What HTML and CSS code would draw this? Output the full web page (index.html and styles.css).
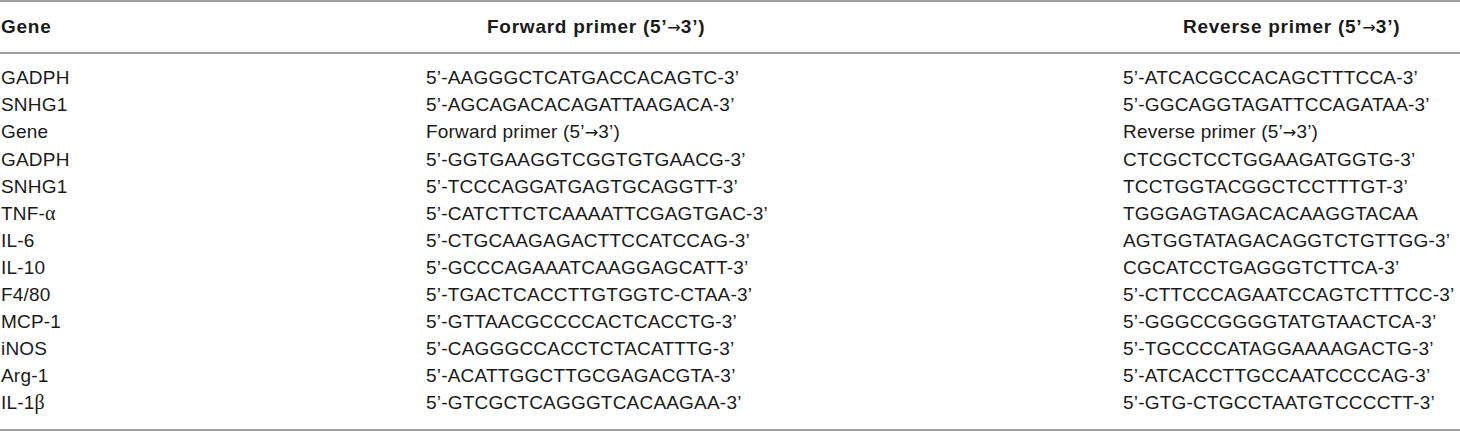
FILE: index.html
```html
<!DOCTYPE html>
<html>
<head>
<meta charset="utf-8">
<link rel="stylesheet" href="styles.css">
</head>
<body>
<table class="primers">
  <thead>
    <tr>
      <th class="c1">Gene</th>
      <th class="c2"><span class="hd2">Forward primer (5’<span class="arr">→</span>3’)</span></th>
      <th class="c3"><span class="hd3">Reverse primer (5’<span class="arr">→</span>3’)</span></th>
    </tr>
  </thead>
  <tbody>
    <tr class="first"><td>GADPH</td><td>5’-AAGGGCTCATGACCACAGTC-3’</td><td>5’-ATCACGCCACAGCTTTCCA-3’</td></tr>
    <tr><td>SNHG1</td><td>5’-AGCAGACACAGATTAAGACA-3’</td><td>5’-GGCAGGTAGATTCCAGATAA-3’</td></tr>
    <tr><td>Gene</td><td>Forward primer (5’<span class="arr">→</span>3’)</td><td>Reverse primer (5’<span class="arr">→</span>3’)</td></tr>
    <tr><td>GADPH</td><td>5’-GGTGAAGGTCGGTGTGAACG-3’</td><td>CTCGCTCCTGGAAGATGGTG-3’</td></tr>
    <tr><td>SNHG1</td><td>5’-TCCCAGGATGAGTGCAGGTT-3’</td><td>TCCTGGTACGGCTCCTTTGT-3’</td></tr>
    <tr><td>TNF-<span class="greek">α</span></td><td>5’-CATCTTCTCAAAATTCGAGTGAC-3’</td><td>TGGGAGTAGACACAAGGTACAA</td></tr>
    <tr><td>IL-6</td><td>5’-CTGCAAGAGACTTCCATCCAG-3’</td><td>AGTGGTATAGACAGGTCTGTTGG-3’</td></tr>
    <tr><td>IL-10</td><td>5’-GCCCAGAAATCAAGGAGCATT-3’</td><td>CGCATCCTGAGGGTCTTCA-3’</td></tr>
    <tr><td>F4/80</td><td>5’-TGACTCACCTTGTGGTC-CTAA-3’</td><td>5’-CTTCCCAGAATCCAGTCTTTCC-3’</td></tr>
    <tr><td>MCP-1</td><td>5’-GTTAACGCCCCACTCACCTG-3’</td><td>5’-GGGCCGGGGTATGTAACTCA-3’</td></tr>
    <tr><td>iNOS</td><td>5’-CAGGGCCACCTCTACATTTG-3’</td><td>5’-TGCCCCATAGGAAAAGACTG-3’</td></tr>
    <tr><td>Arg-1</td><td>5’-ACATTGGCTTGCGAGACGTA-3’</td><td>5’-ATCACCTTGCCAATCCCCAG-3’</td></tr>
    <tr class="last"><td>IL-1<span class="greek">β</span></td><td>5’-GTCGCTCAGGGTCACAAGAA-3’</td><td>5’-GTG-CTGCCTAATGTCCCCTT-3’</td></tr>
  </tbody>
</table>
</body>
</html>
```
FILE: styles.css
```css
html, body {
  margin: 0;
  padding: 0;
  background: #ffffff;
}

.primers {
  width: 1460px;
  border-collapse: separate;
  border-spacing: 0;
  table-layout: fixed;
  font-family: "Liberation Sans", Arial, sans-serif;
  font-size: 19px;
  letter-spacing: 0.2px;
  color: #1a1a1a;
  border-top: 2px solid #a0a0a0;
  border-bottom: 2px solid #a0a0a0;
}

.primers th,
.primers td {
  padding: 0;
  line-height: 27px;
  text-align: left;
  vertical-align: top;
  white-space: nowrap;
}

.primers th {
  font-weight: bold;
  letter-spacing: 0.75px;
  padding-top: 11px;
  padding-bottom: 11px;
  border-bottom: 2px solid #a0a0a0;
}

.primers th:first-child,
.primers td:first-child {
  padding-left: 1px;
}

.primers .c1 { width: 425px; }
.primers .c2 { width: 697px; }
.primers .c3 { width: auto; }

.hd2 { padding-left: 61px; }
.hd3 { padding-left: 60px; }

.arr {
  font-family: "DejaVu Sans", sans-serif;
  font-weight: normal;
  font-size: 0.85em;
  letter-spacing: 0;
}

.greek {
  font-family: "Liberation Serif", serif;
  font-size: 1.05em;
}

.primers tr.first td { padding-top: 10px; }
.primers tr.last td { padding-bottom: 13px; }
```
